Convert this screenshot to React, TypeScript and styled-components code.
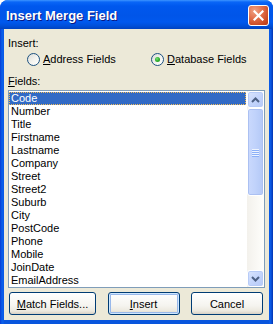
import React from 'react'
import styled, {createGlobalStyle, css} from 'styled-components'

const GlobalStyle = createGlobalStyle`
  body {
    margin: 0;
    background: #ffffff;
    font-family: "Liberation Sans", Arial, sans-serif;
    font-size: 11px;
    color: #000000;
  }
`

const fields = [
    'Code', 'Number', 'Title', 'Firstname', 'Lastname', 'Company', 'Street', 'Street2',
    'Suburb', 'City', 'PostCode', 'Phone', 'Mobile', 'JoinDate', 'EmailAddress'
]

export default function App() {
    return (
        <>
            <GlobalStyle/>
            <Window>
                <TitleBar>
                    <Title>Insert Merge Field</Title>
                    <CloseButton>
                        <svg width="11" height="11" viewBox="0 0 11 11">
                            <path d="M1.5 1.5 L9.5 9.5 M9.5 1.5 L1.5 9.5" stroke="#ffffff" strokeWidth="2.2"
                                  strokeLinecap="square"/>
                        </svg>
                    </CloseButton>
                </TitleBar>
                <Client>
                    <Label>Insert:</Label>
                    <RadioGroup>
                        <RadioItem>
                            <Radio $checked={false}/>
                            <span><Key>A</Key>ddress Fields</span>
                        </RadioItem>
                        <RadioItem>
                            <Radio $checked={true}/>
                            <span><Key>D</Key>atabase Fields</span>
                        </RadioItem>
                    </RadioGroup>
                    <FieldsLabel><Key>F</Key>ields:</FieldsLabel>
                    <ListBox>
                        <Items>
                            {fields.map((f, i) => (
                                <Row key={f} $selected={i === 0}>{f}</Row>
                            ))}
                        </Items>
                        <ScrollBar>
                            <ScrollButton>
                                <svg width="9" height="6" viewBox="0 0 9 6">
                                    <path d="M1 5 L4.5 1.5 L8 5" stroke="#4d6185" strokeWidth="2" fill="none"/>
                                </svg>
                            </ScrollButton>
                            <Track>
                                <Thumb>
                                    <Grip/>
                                    <Grip/>
                                    <Grip/>
                                    <Grip/>
                                </Thumb>
                            </Track>
                            <ScrollButton>
                                <svg width="9" height="6" viewBox="0 0 9 6">
                                    <path d="M1 1 L4.5 4.5 L8 1" stroke="#4d6185" strokeWidth="2" fill="none"/>
                                </svg>
                            </ScrollButton>
                        </ScrollBar>
                    </ListBox>
                    <ButtonRow>
                        <Button $width={87}><Key>M</Key>atch Fields...</Button>
                        <Button $width={72} $default><Key>I</Key>nsert</Button>
                        <Button $width={72}>Cancel</Button>
                    </ButtonRow>
                </Client>
            </Window>
        </>
    )
}

const Window = styled.div`
  width: 273px;
  height: 324px;
  display: flex;
  flex-direction: column;
  background: linear-gradient(to right, #0831d9 0, #0855dd 1px, #0a5ff0 3px, #0855dd 4px, #0855dd 269px, #0a5ff0 270px, #0746c8 272px, #0030b0 273px);
  border-radius: 8px 8px 0 0;
  overflow: hidden;
`

const TitleBar = styled.div`
  height: 29px;
  flex-shrink: 0;
  box-sizing: border-box;
  display: flex;
  align-items: center;
  justify-content: space-between;
  padding: 2px 4px 0 6px;
  background: linear-gradient(to bottom, #3d95ff 0, #0a66f7 2px, #0058ee 6px, #0055e9 16px, #0058ee 22px, #004fd8 26px, #0042c0 29px);
`

const Title = styled.div`
  color: #ffffff;
  font-family: "Liberation Sans", Arial, sans-serif;
  font-weight: bold;
  font-size: 13px;
  line-height: 15px;
  text-shadow: 1px 1px 0 #0a1883;
`

const CloseButton = styled.div`
  width: 21px;
  height: 21px;
  box-sizing: border-box;
  border: 1px solid #ffffff;
  border-radius: 3px;
  display: flex;
  align-items: center;
  justify-content: center;
  background: radial-gradient(circle at 30% 25%, #f0a184 0, #e2704c 40%, #c8461f 80%, #b63a16 100%);
`

const Client = styled.div`
  flex: 1;
  margin: 0 4px 4px 4px;
  padding: 8px 4px 0 4px;
  background: #ece9d8;
  display: flex;
  flex-direction: column;
`

const Label = styled.div`
  line-height: 13px;
  height: 13px;
`

const FieldsLabel = styled(Label)`
  margin-top: 9px;
`

const Key = styled.span`
  text-decoration: underline;
`

const RadioGroup = styled.div`
  margin-top: 3px;
  padding-left: 19px;
  display: grid;
  grid-template-columns: 124px auto;
  height: 13px;
`

const RadioItem = styled.div`
  display: flex;
  align-items: center;
  gap: 3px;
  line-height: 13px;
`

const Radio = styled.div<{ $checked: boolean }>`
  width: 13px;
  height: 13px;
  box-sizing: border-box;
  border-radius: 50%;
  border: 1px solid #1c5180;
  background: linear-gradient(135deg, #dcdcd7 0, #f4f4f0 55%, #ffffff 100%);
  position: relative;
  flex-shrink: 0;
  ${({$checked}) => $checked && css`
    &::after {
      content: '';
      position: absolute;
      left: 3px;
      top: 3px;
      width: 5px;
      height: 5px;
      border-radius: 50%;
      background: radial-gradient(circle at 40% 35%, #7be07b 0, #2eb02e 50%, #1a8c1a 100%);
    }
  `}
`

const ListBox = styled.div`
  margin-top: 2px;
  height: 198px;
  box-sizing: border-box;
  border: 1px solid #7f9db9;
  background: #ffffff;
  display: flex;
  overflow: hidden;
`

const Items = styled.div`
  flex: 1;
  padding-top: 1px;
  overflow: hidden;
  padding-right: 1px;
`

const Row = styled.div<{ $selected: boolean }>`
  height: 13px;
  line-height: 13px;
  padding-left: 2px;
  white-space: nowrap;
  ${({$selected}) => $selected && css`
    background: #316ac5;
    color: #ffffff;
    outline: 1px dotted #f2bd5a;
    outline-offset: -1px;
  `}
`

const ScrollBar = styled.div`
  width: 17px;
  display: flex;
  flex-direction: column;
  background: linear-gradient(to right, #f3f1ec, #fefefb);
`

const ScrollButton = styled.div`
  width: 17px;
  height: 17px;
  box-sizing: border-box;
  border: 1px solid #ffffff;
  border-radius: 3px;
  display: flex;
  align-items: center;
  justify-content: center;
  background: linear-gradient(135deg, #dae5fd 0, #c4d5fc 50%, #b5c9f7 100%);
  box-shadow: inset 0 0 0 1px #b7cbf7;
`

const Track = styled.div`
  flex: 1;
`

const Thumb = styled.div`
  height: 88px;
  box-sizing: border-box;
  border: 1px solid #ffffff;
  border-radius: 3px;
  background: linear-gradient(to right, #cad9fd 0, #c0d2fb 50%, #b3c8f6 100%);
  box-shadow: inset 0 0 0 1px #abc0f2;
  display: flex;
  flex-direction: column;
  align-items: center;
  justify-content: center;
  gap: 1px;
`

const Grip = styled.div`
  width: 7px;
  height: 1px;
  background: #eef4fe;
  box-shadow: 0 1px 0 #8cb0f8;
`

const ButtonRow = styled.div`
  margin-top: 4px;
  padding: 0 2px 0 1px;
  display: flex;
  justify-content: space-between;
`

const Button = styled.div<{ $width: number, $default?: boolean }>`
  width: ${({$width}) => $width}px;
  height: 23px;
  box-sizing: border-box;
  border: 1px solid #003c74;
  border-radius: 3px;
  display: flex;
  align-items: center;
  justify-content: center;
  background: linear-gradient(to bottom, #ffffff 0, #f5f4ef 60%, #ece9df 85%, #d6d0c5 100%);
  ${({$default}) => $default && css`
    box-shadow: inset 0 0 0 1px #cee7ff, inset 0 0 0 2px #98b8ea;
  `}
`
